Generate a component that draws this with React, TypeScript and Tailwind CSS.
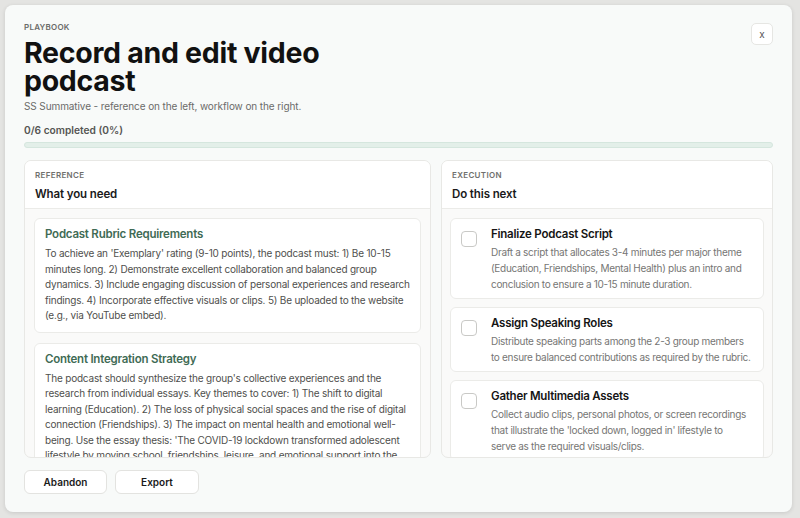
import { Fragment } from "react";

const references = [
  {
    title: "Podcast Rubric Requirements",
    body: "To achieve an 'Exemplary' rating (9-10 points), the podcast must: 1) Be 10-15 minutes long. 2) Demonstrate excellent collaboration and balanced group dynamics. 3) Include engaging discussion of personal experiences and research findings. 4) Incorporate effective visuals or clips. 5) Be uploaded to the website (e.g., via YouTube embed).",
  },
  {
    title: "Content Integration Strategy",
    body: "The podcast should synthesize the group's collective experiences and the research from individual essays. Key themes to cover: 1) The shift to digital learning (Education). 2) The loss of physical social spaces and the rise of digital connection (Friendships). 3) The impact on mental health and emotional well-being. Use the essay thesis: 'The COVID-19 lockdown transformed adolescent lifestyle by moving school, friendships, leisure, and emotional support into the digital world.'",
  },
];

const steps = [
  {
    title: "Finalize Podcast Script",
    body: "Draft a script that allocates 3-4 minutes per major theme (Education, Friendships, Mental Health) plus an intro and conclusion to ensure a 10-15 minute duration.",
  },
  {
    title: "Assign Speaking Roles",
    body: "Distribute speaking parts among the 2-3 group members to ensure balanced contributions as required by the rubric.",
  },
  {
    title: "Gather Multimedia Assets",
    body: "Collect audio clips, personal photos, or screen recordings that illustrate the 'locked down, logged in' lifestyle to serve\u00a0as the required visuals/clips.",
  },
  {
    title: "Record the Episode",
    body: "Record the full conversation in one session, keeping an eye on time so each theme gets its share.",
  },
];

const PanelHeader = ({ kicker, title }: { kicker: string; title: string }) => (
  <div className="px-[10px] pt-[8px] pb-[6px] border-b border-[#ebebe8] bg-white">
    <div className="text-[8px] leading-[12px] font-semibold tracking-[0.04em] text-[#6f6f6c]">{kicker}</div>
    <div className="mt-[5px] text-[11.5px] leading-[16px] font-semibold tracking-[-0.01em] text-[#1a1a1a]">{title}</div>
  </div>
);

const App = () => {
  return (
    <Fragment>
      <div
        className="w-[800px] h-[518px] bg-[#e4e4e2] p-[5px] overflow-hidden"
        style={{ fontFamily: "Inter, 'Liberation Sans', sans-serif" }}
      >
        <div className="h-[507px] w-[787px] bg-[#f8faf9] rounded-[8px] shadow-[0_1px_4px_rgba(0,0,0,0.12)] px-[19px] pt-[16px] pb-[18px] flex flex-col">
          {/* header */}
          <div className="flex justify-between items-start">
            <div>
              <div className="text-[8px] leading-[12px] font-semibold tracking-[0.03em] text-[#6a6a68]">PLAYBOOK</div>
              <h1 className="mt-[6px] max-w-[340px] text-[28.5px] leading-[28px] font-bold tracking-[-0.01em] text-[#111]">
                Record and edit video podcast
              </h1>
            </div>
            <button className="mt-[2px] w-[22px] h-[22px] rounded-[5px] border border-[#e6e6e3] bg-white text-[10px] leading-none text-[#555]">
              x
            </button>
          </div>
          <div className="mt-[4px] text-[10px] leading-[14px] tracking-[-0.01em] text-[#6b6b69]">
            SS Summative - reference on the left, workflow on the right.
          </div>
          <div className="mt-[10px] text-[10.2px] leading-[14px] font-semibold text-[#555553]">0/6 completed (0%)</div>
          <div className="mt-[5px] h-[6px] rounded-full bg-[#e3efe9] border border-[#d5e6de]" />

          {/* panels */}
          <div className="mt-[12px] flex-1 min-h-0 grid grid-cols-[407px_332px] gap-[10px]">
            <div className="flex flex-col min-h-0 rounded-[7px] border border-[#e8e8e5] bg-[#fafaf9] overflow-hidden">
              <PanelHeader kicker="REFERENCE" title="What you need" />
              <div className="flex-1 min-h-0 overflow-hidden p-[9px] flex flex-col gap-[10px]">
                {references.map((r) => (
                  <div key={r.title} className="bg-white rounded-[6px] border border-[#ebebe8] px-[10px] pt-[7px] pb-[8px]">
                    <div className="text-[11.5px] leading-[16px] font-semibold tracking-[-0.02em] text-[#3f6b55]">{r.title}</div>
                    <p className="mt-[4px] text-[10px] leading-[15.5px] tracking-[-0.02em] text-[#4f4f4d]">{r.body}</p>
                  </div>
                ))}
              </div>
            </div>

            <div className="flex flex-col min-h-0 rounded-[7px] border border-[#e8e8e5] bg-[#fafaf9] overflow-hidden">
              <PanelHeader kicker="EXECUTION" title="Do this next" />
              <div className="flex-1 min-h-0 overflow-hidden px-[8px] pt-[9px] flex flex-col gap-[8px]">
                {steps.map((s) => (
                  <div key={s.title} className="bg-white rounded-[6px] border border-[#ebebe8] pl-[10px] pt-[7px] pb-[6px] flex gap-[14px]">
                    <div className="mt-[5px] w-[16px] h-[16px] shrink-0 rounded-[4px] border border-[#c9c9c6] bg-white" />
                    <div className="w-[262px]">
                      <div className="text-[11.5px] leading-[16px] font-semibold tracking-[-0.02em] text-[#151515]">{s.title}</div>
                      <p className="mt-[2px] text-[10px] leading-[16px] tracking-[-0.03em] text-[#767674]">{s.body}</p>
                    </div>
                  </div>
                ))}
              </div>
            </div>
          </div>

          {/* footer */}
          <div className="mt-[12px] flex gap-[8px]">
            <button className="w-[83px] h-[24px] rounded-[6px] border border-[#e3e3e0] bg-white text-[10px] font-semibold text-[#1a1a1a]">
              Abandon
            </button>
            <button className="w-[84px] h-[24px] rounded-[6px] border border-[#e3e3e0] bg-white text-[10px] font-semibold text-[#1a1a1a]">
              Export
            </button>
          </div>
        </div>
      </div>
    </Fragment>
  );
};

export default App;
